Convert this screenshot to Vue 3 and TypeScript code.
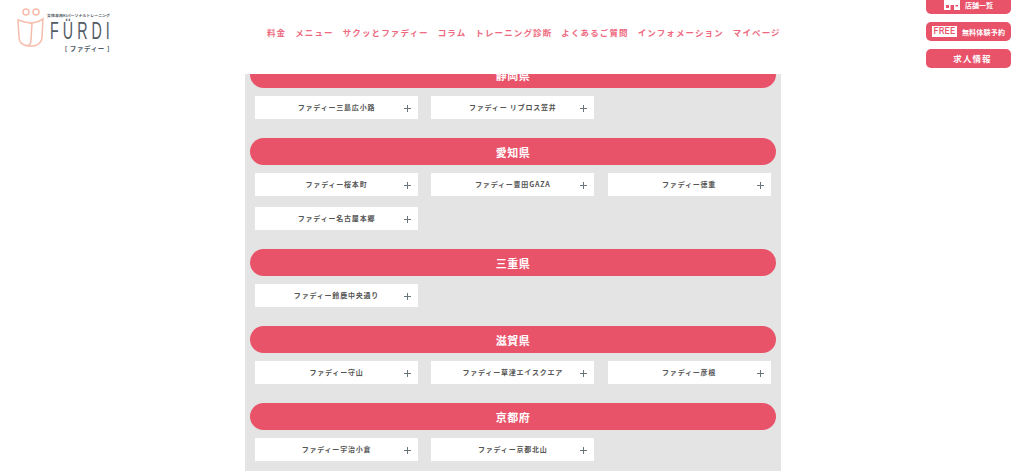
<script setup lang="ts">
interface Section { name: string; shops: string[] }
const nav: string[] = ['料金', 'メニュー', 'サクッとファディー', 'コラム', 'トレーニング診断', 'よくあるご質問', 'インフォメーション', 'マイページ']
const sections: Section[] = [
  { name: '静岡県', shops: ['ファディー三島広小路', 'ファディー リブロス笠井'] },
  { name: '愛知県', shops: ['ファディー桜本町', 'ファディー豊田GAZA', 'ファディー徳重', 'ファディー名古屋本郷'] },
  { name: '三重県', shops: ['ファディー鈴鹿中央通り'] },
  { name: '滋賀県', shops: ['ファディー守山', 'ファディー草津エイスクエア', 'ファディー彦根'] },
  { name: '京都府', shops: ['ファディー宇治小倉', 'ファディー京都北山'] },
]
</script>

<template>
  <div class="page">
    <header class="header">
      <div class="logo">
        <svg class="logo-mark" width="27" height="39" viewBox="0 0 27 39" fill="none" stroke="#f6bcab" stroke-width="1.500">
          <circle cx="9" cy="4" r="3" />
          <circle cx="19" cy="4" r="3" />
          <path d="M1 12 C5 13 10 15 15 15 L14 32 C14 36 12 38 9 37.500 C4 36.500 2 33 2 29 Z" />
          <path d="M13 15 C17 15 22 13.500 26 11 L25 29 C25 34 21 37.500 16 38 C13 38 10 37.800 9 37.500" />
        </svg>
        <div class="logo-text">
          <span class="logo-sub">女性専用AIパーソナルトレーニング</span>
          <span class="logo-name">FÜRDI</span>
          <span class="logo-kana">[ ファディー ]</span>
        </div>
      </div>
      <nav class="nav">
        <a v-for="item in nav" :key="item" class="nav-item">{{ item }}</a>
      </nav>
      <div class="actions">
        <a class="action action-shop">
          <svg width="16" height="11" viewBox="0 0 16 11" fill="#fff">
            <path d="M0 0H16V11H10V6H6.500V11H0ZM2 6V9H5V6ZM11.500 6V7.500H14V6Z" fill-rule="evenodd" />
          </svg>
          <span>店舗一覧</span>
        </a>
        <a class="action action-free">
          <span class="free">FREE</span>
          <span>無料体験予約</span>
        </a>
        <a class="action action-job">求人情報</a>
      </div>
    </header>
    <main class="panel">
      <section v-for="s in sections" :key="s.name" class="section">
        <h2 class="bar">{{ s.name }}</h2>
        <ul class="grid">
          <li v-for="shop in s.shops" :key="shop" class="card">
            <span>{{ shop }}</span>
            <i class="plus"></i>
          </li>
        </ul>
      </section>
    </main>
  </div>
</template>

<style scoped>
.page {
  height: 471px;
  overflow: hidden;
  display: flex;
  flex-direction: column;
  background: #fff;
  font-family: "Noto Sans CJK JP", "Noto Sans", sans-serif;
}
.header {
  flex: none;
  height: 74px;
  display: flex;
  position: relative;
  z-index: 2;
  background: #fff;
}
.logo {
  flex: none;
  width: 250px;
  padding: 8px 0 0 17px;
  box-sizing: border-box;
  display: flex;
  gap: 2px;
  align-items: flex-start;
}
.logo-mark { flex: none; }
.logo-text {
  display: flex;
  flex-direction: column;
  align-items: flex-end;
  width: 64px;
  color: #525c65;
}
.logo-sub { font-size: 3.950px; line-height: 6px; margin-top: 4px; white-space: nowrap; font-weight: 700; }
.logo-name {
  font-family: "Liberation Sans", sans-serif;
  font-size: 23px;
  line-height: 24px;
  letter-spacing: 6.500px;
  margin-right: -4px;
  margin-top: 1px;
  transform: scaleX(0.62);
  transform-origin: right center;
}
.logo-kana { font-size: 6.500px; line-height: 10px; letter-spacing: 0.600px; font-weight: 700; white-space: nowrap; margin-top: 0; }
.nav {
  flex: none;
  display: flex;
  gap: 9px;
  margin-left: 17px;
  padding-top: 25px;
  height: 14px;
}
.nav-item {
  font-size: 8.500px;
  font-weight: 700;
  letter-spacing: 1.120px;
  line-height: 14px;
  color: #ee6a80;
  white-space: nowrap;
}
.actions {
  position: absolute;
  top: -5px;
  right: 13px;
  width: 85px;
  display: flex;
  flex-direction: column;
  gap: 8px;
}
.action {
  height: 19px;
  border-radius: 5px;
  background: #e9536a;
  color: #fff;
  display: flex;
  align-items: center;
  justify-content: center;
  font-size: 7px;
  font-weight: 700;
  white-space: nowrap;
}
.action-shop { gap: 5px; }
.action-free { gap: 5px; letter-spacing: 0.200px; }
.free {
  background: #fff;
  color: #e9536a;
  font-family: Roboto, "Liberation Sans", sans-serif;
  font-size: 9px;
  font-weight: 500;
  line-height: 11px;
  width: 25px;
  text-align: center;
  letter-spacing: 0.300px;
}
.action-job { font-size: 8.500px; letter-spacing: 1.100px; padding: 0 0 2px 8px; box-sizing: border-box; }
.panel {
  flex: none;
  width: 536px;
  margin: -12.700px 0 0 245px;
  padding: 0 5px;
  box-sizing: border-box;
  background: #e4e4e4;
  position: relative;
  z-index: 1;
}
.section { padding-bottom: 19.400px; }
.bar {
  margin: 0;
  height: 27px;
  border-radius: 14px;
  background: #e9536a;
  color: #fff;
  text-align: center;
  font-size: 11px;
  line-height: 28px;
  font-weight: 700;
  letter-spacing: 0.500px;
}
.grid {
  list-style: none;
  margin: 7.600px 0 0;
  padding: 0 5px;
  display: grid;
  grid-template-columns: repeat(3, 163px);
  column-gap: 13.300px;
  row-gap: 10.700px;
}
.card {
  height: 23px;
  background: #fff;
  position: relative;
  display: flex;
  align-items: center;
  justify-content: center;
  font-size: 7px;
  font-weight: 700;
  letter-spacing: 0.800px;
  color: #555;
  white-space: nowrap;
}
.plus {
  position: absolute;
  right: 7px;
  top: 9px;
  width: 7px;
  height: 7px;
  background:
    linear-gradient(#66767c, #66767c) center / 7px 1px no-repeat,
    linear-gradient(#66767c, #66767c) center / 1px 7px no-repeat;
}
</style>

<style>
html, body { margin: 0; background: #fff; overflow: hidden; }
</style>
